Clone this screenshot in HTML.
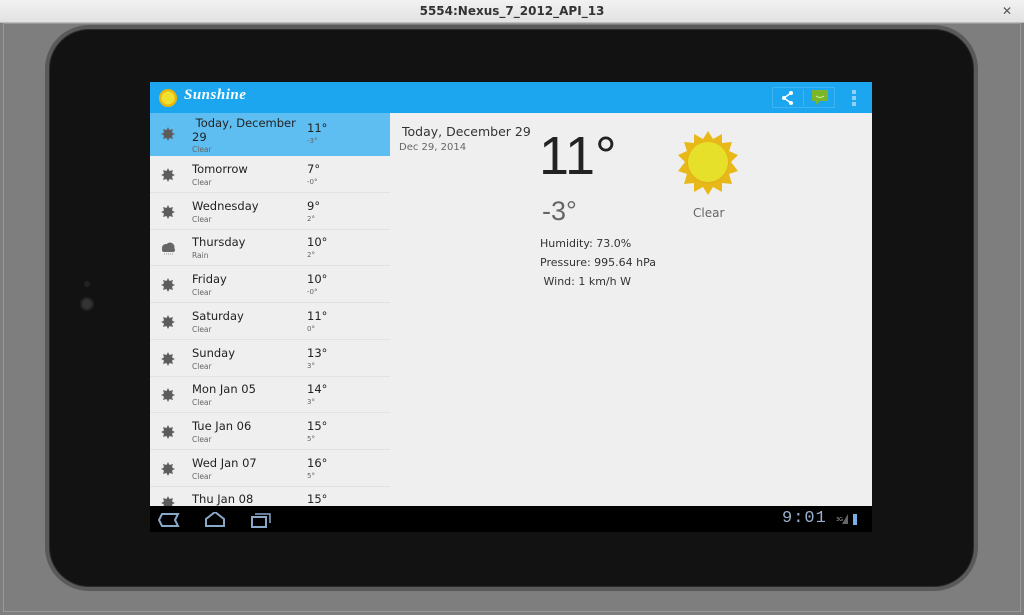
<!DOCTYPE html>
<html><head><meta charset="utf-8"><style>
*{margin:0;padding:0;box-sizing:border-box}
body{width:1024px;height:615px;overflow:hidden;background:#7e7e7e;font-family:"DejaVu Sans","Liberation Sans",sans-serif;position:relative}
.title{position:absolute;left:0;top:0;width:1024px;height:23px;background:linear-gradient(#f2f2f2,#e2e2e2);border-bottom:1px solid #bbb;text-align:center;font:bold 12px "DejaVu Sans",sans-serif;color:#333;line-height:23px}
.title .x{position:absolute;right:12px;top:0;font-weight:normal;color:#555}
.frame{position:absolute;left:3px;top:23px;width:1018px;height:589px;border:1px solid #999;background:#7e7e7e}
.tab{position:absolute;left:45px;top:25px;width:933px;height:566px;border-radius:44px;background:#5a5a5a;padding:4px}
.tabin{width:100%;height:100%;border-radius:40px;background:#121212;border:1px solid #2a2a2a}
.cam{position:absolute;left:80px;top:297px;width:14px;height:14px;border-radius:50%;background:#333;border:2px solid #222}
.cam2{position:absolute;left:84px;top:281px;width:6px;height:6px;border-radius:50%;background:#222}
.screen{position:absolute;left:150px;top:82px;width:722px;height:450px;background:#efefef;overflow:hidden}
.ab{position:absolute;left:0;top:0;width:722px;height:31px;background:#1ba6ef}
.ab .t{position:absolute;left:34px;top:5px;color:#fff;font:italic bold 15px "Liberation Serif",serif;letter-spacing:0.5px}
.list{position:absolute;left:0;top:31px;width:240px;height:393px}
.row{position:absolute;left:0;width:240px;height:37px;border-bottom:1px solid #e2e2e2}
.row .ic{position:absolute;left:10px;top:11px;width:16px;height:16px}
.row .d{position:absolute;left:42px;top:6px;font-size:11.5px;color:#222}
.row .s{position:absolute;left:42px;top:22px;font-size:7.5px;color:#666}
.row .h{position:absolute;left:157px;top:6px;font-size:11.5px;color:#222}
.row .l{position:absolute;left:157px;top:22px;font-size:7px;color:#666}
.nav{position:absolute;left:0;top:424px;width:722px;height:26px;background:#000}
</style></head><body>
<svg width="0" height="0" style="position:absolute"><defs><g id="gs"><polygon fill="#666" points="8,1 9.5,4 13,3 12,6.5 15,8 12,9.5 13,13 9.5,12 8,15 6.5,12 3,13 4,9.5 1,8 4,6.5 3,3 6.5,4"/><circle cx="8" cy="8" r="4.5" fill="#5c5c5c"/></g></defs></svg>
<div class="title">5554:Nexus_7_2012_API_13<span class="x">✕</span></div>
<div class="frame"></div>
<div class="tab"><div class="tabin"></div></div>
<div class="cam2"></div><div class="cam"></div>
<div class="screen">
 <div class="ab">
  <svg style="position:absolute;left:8px;top:6px" width="20" height="20" viewBox="0 0 20 20"><circle cx="10" cy="10" r="9" fill="#e8b810"/><circle cx="10" cy="10" r="6.5" fill="#f0e030"/></svg>
  <div class="t">Sunshine</div>
  <div style="position:absolute;left:622px;top:5px;width:63px;height:21px;border:1px solid #3eb4f0"></div>
  <div style="position:absolute;left:653px;top:7px;width:1px;height:17px;background:#3eb4f0"></div>
  <svg style="position:absolute;left:630px;top:8px" width="16" height="16" viewBox="0 0 16 16"><path d="M11 3 L4 8 L11 13" stroke="#fff" stroke-width="1.5" fill="none"/><circle cx="11" cy="3" r="2" fill="#fff"/><circle cx="4" cy="8" r="2" fill="#fff"/><circle cx="11" cy="13" r="2" fill="#fff"/></svg>
  <svg style="position:absolute;left:661px;top:7px" width="18" height="17" viewBox="0 0 18 17"><rect x="1" y="1" width="16" height="11" fill="#7ab52a"/><path d="M5 12 L5 16 L9 12Z" fill="#7ab52a"/><path d="M5 7 Q9 10 13 7" stroke="#d8f0a0" fill="none"/></svg>
  <div style="position:absolute;left:702px;top:8px;width:4px;height:4px;background:#8fd0f5;box-shadow:0 6px 0 #8fd0f5,0 12px 0 #8fd0f5"></div>
 </div>
 <div class="list">
  <div class="row" style="top:0;height:43px;background:#5ebef2;border:none"><svg class="ic" style="top:13px"><use href="#gs"/></svg><div class="d" style="top:3px;line-height:14px">&nbsp;Today, December<br>29</div><div class="s" style="top:32px">Clear</div><div class="h" style="top:8px">11°</div><div class="l" style="top:24px">-3°</div></div>
  <div class="row" style="top:43px"><svg class="ic"><use href="#gs"/></svg><div class="d">Tomorrow</div><div class="s">Clear</div><div class="h">7°</div><div class="l">-0°</div></div>
  <div class="row" style="top:79.7px"><svg class="ic"><use href="#gs"/></svg><div class="d">Wednesday</div><div class="s">Clear</div><div class="h">9°</div><div class="l">2°</div></div>
  <div class="row" style="top:116.4px"><svg class="ic"><circle cx="6" cy="8" r="4" fill="#666"/><circle cx="10" cy="7" r="4.5" fill="#666"/><rect x="2" y="8" width="13" height="4" rx="2" fill="#666"/><path d="M4 14h9" stroke="#999" stroke-dasharray="1 1"/></svg><div class="d">Thursday</div><div class="s">Rain</div><div class="h">10°</div><div class="l">2°</div></div>
  <div class="row" style="top:153.1px"><svg class="ic"><use href="#gs"/></svg><div class="d">Friday</div><div class="s">Clear</div><div class="h">10°</div><div class="l">-0°</div></div>
  <div class="row" style="top:189.8px"><svg class="ic"><use href="#gs"/></svg><div class="d">Saturday</div><div class="s">Clear</div><div class="h">11°</div><div class="l">0°</div></div>
  <div class="row" style="top:226.5px"><svg class="ic"><use href="#gs"/></svg><div class="d">Sunday</div><div class="s">Clear</div><div class="h">13°</div><div class="l">3°</div></div>
  <div class="row" style="top:263.2px"><svg class="ic"><use href="#gs"/></svg><div class="d">Mon Jan 05</div><div class="s">Clear</div><div class="h">14°</div><div class="l">3°</div></div>
  <div class="row" style="top:299.9px"><svg class="ic"><use href="#gs"/></svg><div class="d">Tue Jan 06</div><div class="s">Clear</div><div class="h">15°</div><div class="l">5°</div></div>
  <div class="row" style="top:336.6px"><svg class="ic"><use href="#gs"/></svg><div class="d">Wed Jan 07</div><div class="s">Clear</div><div class="h">16°</div><div class="l">5°</div></div>
  <div class="row" style="top:373.3px"><svg class="ic" style="top:9px"><use href="#gs"/></svg><div class="d">Thu Jan 08</div><div class="h">15°</div></div>
 </div>
 <div style="position:absolute;left:252px;top:42px;font-size:12.5px;color:#333">Today, December 29</div>
 <div style="position:absolute;left:249px;top:60px;font-size:10px;color:#666">Dec 29, 2014</div>
 <div style="position:absolute;left:389px;top:44px;font:54px 'Liberation Sans',sans-serif;color:#222;line-height:60px">11°</div>
 <div style="position:absolute;left:392px;top:114px;font:27px 'Liberation Sans',sans-serif;color:#666">-3°</div>
 <div style="position:absolute;left:390px;top:152px;font-size:11px;color:#333;line-height:19px">Humidity: 73.0%<br>Pressure: 995.64 hPa<br>&nbsp;Wind: 1 km/h W</div>
 <svg style="position:absolute;left:525px;top:48px" width="66" height="66" viewBox="-33 -33 66 66">
  <polygon fill="#e8b818" points="0,-32 5,-24 14,-29 14,-20 24,-21 21,-12 30,-8 23,-1 30,8 21,11 24,21 14,20 14,29 5,24 0,32 -5,24 -14,29 -14,20 -24,21 -21,11 -30,8 -23,-1 -30,-8 -21,-12 -24,-21 -14,-20 -14,-29 -5,-24"/>
  <circle r="21" fill="#e2b418"/><circle r="20" cy="-1" fill="#e6e02a"/>
 </svg>
 <div style="position:absolute;left:543px;top:124px;font-size:12px;color:#666">Clear</div>
 <div class="nav">
  <svg style="position:absolute;left:8px;top:6px" width="120" height="16" viewBox="0 0 120 16"><path d="M4 2 L20 2 L17 8 L20 14 L4 14 L1 8Z" fill="none" stroke="#8aa8c8" stroke-width="2"/><path d="M48 7 L57 0 L66 7 L66 14 L48 14Z" fill="none" stroke="#8aa8c8" stroke-width="2"/><rect x="94" y="5" width="14" height="10" fill="none" stroke="#8aa8c8" stroke-width="2"/><path d="M97 2 L112 2 L112 11" fill="none" stroke="#8aa8c8" stroke-width="1.5"/></svg>
  <div style="position:absolute;left:632px;top:3px;font-size:17px;color:#9ab0cc;font-family:'Liberation Mono',monospace;letter-spacing:1px">9:01</div>
  <div style="position:absolute;left:686px;top:11px;font-size:5px;color:#aaa">3G</div>
  <div style="position:absolute;left:692px;top:8px;width:0;height:0;border-left:6px solid transparent;border-bottom:10px solid #666"></div>
  <div style="position:absolute;left:703px;top:8px;width:4px;height:11px;background:#7aaee8"></div>
 </div>
</div>
</body></html>
